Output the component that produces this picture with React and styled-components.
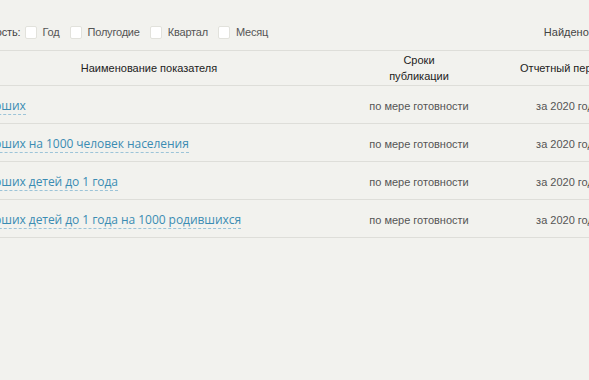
import React from "react";
import styled, { createGlobalStyle } from "styled-components";

const Global = createGlobalStyle`
  html, body { margin: 0; padding: 0; background: #f2f2ee; overflow: hidden; }
  body { font-family: "Liberation Sans", Arial, sans-serif; font-size: 11px; color: #333; }
`;

const Page = styled.div`
  width: 722px;
  margin-left: -66px;
  padding-top: 19px;
`;

const Filters = styled.div`
  display: flex;
  align-items: center;
  justify-content: space-between;
  height: 26px;
  padding: 0 0 5px 6px;
  border-bottom: 1px solid #deded9;
`;

const FilterGroup = styled.div`
  display: flex;
  align-items: center;
`;

const FilterLabel = styled.span`
  color: #444;
  margin-right: 4px;
  letter-spacing: -0.1px;
`;

const Option = styled.label`
  display: flex;
  align-items: center;
  margin-right: 10px;
  color: #555;
  letter-spacing: -0.2px;
`;

const Box = styled.span`
  width: 12px;
  height: 13px;
  background: #fff;
  border: 1px solid #e2e2dc;
  border-radius: 2px;
  margin-right: 6px;
  box-sizing: border-box;
`;

const Found = styled.span`
  color: #444;
  margin-right: 55px;
`;

const Table = styled.table`
  width: 100%;
  border-collapse: collapse;
  table-layout: fixed;
`;

const Th = styled.th`
  width: ${(p) => p.$w}px;
  height: 34px;
  font-weight: normal;
  color: #222;
  line-height: 16px;
  text-align: center;
  vertical-align: middle;
  border-bottom: 1px solid #deded9;
  padding: 0;
`;

const Td = styled.td`
  height: 38px;
  padding: 2px 0 0;
  box-sizing: border-box;
  border-bottom: 1px solid #deded9;
  text-align: ${(p) => (p.$left ? "left" : "center")};
  vertical-align: middle;
  color: #555;
`;

const Link = styled.a`
  font-family: "Open Sans", sans-serif;
  font-size: 12px;
  line-height: 16px;
  letter-spacing: -0.05px;
  color: #3a8cb3;
  text-decoration: none;
  border-bottom: 1px dashed #9cc4d8;
`;

const rows = [
  "Число умерших",
  "Число умерших на 1000 человек населения",
  "Число умерших детей до 1 года",
  "Число умерших детей до 1 года на 1000 родившихся",
];

export default function App() {
  return (
    <>
      <Global />
      <Page>
        <Filters>
          <FilterGroup>
            <FilterLabel>Периодичность:</FilterLabel>
            {["Год", "Полугодие", "Квартал", "Месяц"].map((o) => (
              <Option key={o}>
                <Box />
                {o}
              </Option>
            ))}
          </FilterGroup>
          <Found>Найдено: 4</Found>
        </Filters>
        <Table>
          <thead>
            <tr>
              <Th $w={430}>Наименование показателя</Th>
              <Th $w={110}>
                Сроки
                <br />
                публикации
              </Th>
              <Th $w={182}>Отчетный период</Th>
            </tr>
          </thead>
          <tbody>
            {rows.map((r) => (
              <tr key={r}>
                <Td $left>
                  <Link href="#">{r}</Link>
                </Td>
                <Td>по мере готовности</Td>
                <Td>за 2020 год</Td>
              </tr>
            ))}
          </tbody>
        </Table>
      </Page>
    </>
  );
}
